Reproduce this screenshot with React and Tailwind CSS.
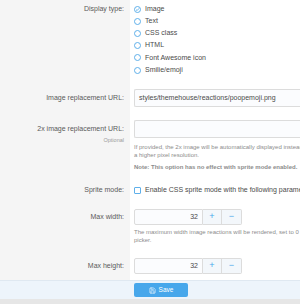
import React from "react";
import { Save } from "lucide-react";

const Label = ({ children, className = "" }) => (
  <div className={"w-[130px] shrink-0 bg-[#f5f5f5] text-right pr-[6px] text-[#5a5a5a] " + className}>{children}</div>
);

function Radio({ checked, children }) {
  return (
    <div className="flex items-center h-[12.2px] text-[#4a4a4a]">
      <span className="w-[7px] h-[7px] rounded-full border border-[#5fb0ea] bg-white flex items-center justify-center mr-[4px]">
        {checked && (
          <svg width="5" height="5" viewBox="0 0 10 10">
            <path d="M2 5.2 L4.2 7.2 L8 2.8" stroke="#47a7eb" strokeWidth="1.6" fill="none" />
          </svg>
        )}
      </span>
      {children}
    </div>
  );
}

function NumBox({ value }) {
  return (
    <div className="flex h-[16px]">
      <div className="w-[69px] border border-[#dcdcdc] bg-[#fbfcfe] rounded-l-[2px] text-right pr-[4px] leading-[14px] text-[#4a4a4a]">{value}</div>
      <div className="w-[19px] border-y border-r border-[#dcdcdc] bg-[#f3f7fb] text-[#47a7eb] flex items-center justify-center text-[9px]">+</div>
      <div className="w-[20px] border-y border-r border-[#dcdcdc] bg-[#f3f7fb] text-[#47a7eb] flex items-center justify-center rounded-r-[2px] text-[9px]">−</div>
    </div>
  );
}

export default function App() {
  return (
    <div className="w-[300px] h-[304px] overflow-hidden bg-[#e6e6e6] text-[7px]" style={{ fontFamily: '"Liberation Sans", Arial, sans-serif' }}>
      <div className="flex">
        <Label className="pt-[3px] leading-[12.2px]">Display type:</Label>
        <div className="flex-1 bg-white pl-[4px] pt-[3px] pb-[11px]">
          <Radio checked>Image</Radio>
          <Radio>Text</Radio>
          <Radio>CSS class</Radio>
          <Radio>HTML</Radio>
          <Radio>Font Awesome icon</Radio>
          <Radio>Smilie/emoji</Radio>
        </div>
      </div>
      <div className="flex">
        <Label className="pt-[2px] leading-[18px]">Image replacement URL:</Label>
        <div className="flex-1 bg-white pl-[4px] pt-[2px] pb-[13px]">
          <div className="h-[18px] border border-[#dcdcdc] border-r-0 rounded-l-[2px] bg-[#fbfcfe] pl-[4px] leading-[16px] text-[#4a4a4a] whitespace-nowrap overflow-hidden">
            styles/themehouse/reactions/poopemoji.png
          </div>
        </div>
      </div>
      <div className="flex">
        <Label>
          <div className="leading-[18px]">2x image replacement URL:</div>
          <div className="text-[5.5px] text-[#9a9a9a] leading-[5px]">Optional</div>
        </Label>
        <div className="flex-1 bg-white pl-[4px] pb-[13px] overflow-hidden">
          <div className="h-[18px] border border-[#dcdcdc] border-r-0 rounded-l-[2px] bg-[#fbfcfe]"></div>
          <div className="mt-[5px] text-[6px] leading-[8px] text-[#8c8c8c] whitespace-nowrap">
            If provided, the 2x image will be automatically displayed instead
            <br />a higher pixel resolution.
          </div>
          <div className="mt-[4px] text-[6px] leading-[8px] text-[#8c8c8c] font-bold whitespace-nowrap">
            Note: This option has no effect with sprite mode enabled.
          </div>
        </div>
      </div>
      <div className="flex">
        <Label className="leading-[12px]">Sprite mode:</Label>
        <div className="flex-1 bg-white pl-[4px] pb-[13px] flex items-center h-[25px] self-start overflow-hidden">
          <div className="flex items-center h-[12px] text-[#4a4a4a] whitespace-nowrap">
            <span className="w-[7px] h-[7px] rounded-[1px] border border-[#5fb0ea] bg-white mr-[4px] shrink-0"></span>
            Enable CSS sprite mode with the following parameters
          </div>
        </div>
      </div>
      <div className="flex">
        <Label className="leading-[16px]">Max width:</Label>
        <div className="flex-1 bg-white pl-[4px] pb-[14px] overflow-hidden">
          <NumBox value="32" />
          <div className="mt-[3px] text-[6px] leading-[8px] text-[#8c8c8c] whitespace-nowrap">
            The maximum width image reactions will be rendered, set to 0 to
            <br />picker.
          </div>
        </div>
      </div>
      <div className="flex">
        <Label className="leading-[16px]">Max height:</Label>
        <div className="flex-1 bg-white pl-[4px] pb-[6px]">
          <NumBox value="32" />
        </div>
      </div>
      <div className="h-[19px] bg-[#edf4fb] border-t border-[#dfe8f1] pl-[134px] pt-[2px]">
        <div className="w-[54px] h-[14px] bg-[#47a7eb] rounded-[2px] flex items-center justify-center text-white text-[6.5px] gap-[3px]">
          <Save size={7} strokeWidth={2} />
          Save
        </div>
      </div>
    </div>
  );
}
